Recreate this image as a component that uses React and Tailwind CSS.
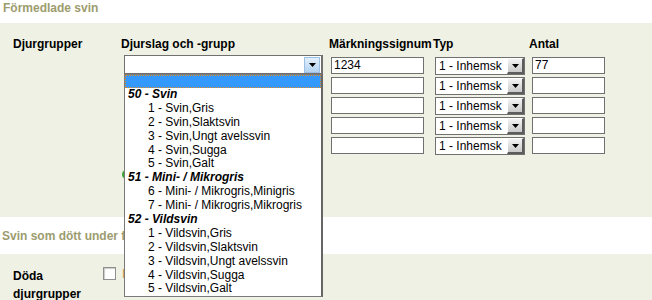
import React from 'react';

const groups = [
    { label: '50 - Svin', items: ['1 - Svin,Gris', '2 - Svin,Slaktsvin', '3 - Svin,Ungt avelssvin', '4 - Svin,Sugga', '5 - Svin,Galt'] },
    { label: '51 - Mini- / Mikrogris', items: ['6 - Mini- / Mikrogris,Minigris', '7 - Mini- / Mikrogris,Mikrogris'] },
    { label: '52 - Vildsvin', items: ['1 - Vildsvin,Gris', '2 - Vildsvin,Slaktsvin', '3 - Vildsvin,Ungt avelssvin', '4 - Vildsvin,Sugga', '5 - Vildsvin,Galt'] },
];

const rows = [
    { signum: '1234', antal: '77' },
    { signum: '', antal: '' },
    { signum: '', antal: '' },
    { signum: '', antal: '' },
    { signum: '', antal: '' },
];

const Triangle = () => (
    <svg width="7" height="4" viewBox="0 0 7 4"><path d="M0 0h7L3.5 4z" fill="#000" /></svg>
);

const TextBox = ({ value, className }) => (
    <div className={`h-[17px] bg-white border border-[#707070] px-[2px] leading-[15px] ${className}`}>{value}</div>
);

const TypSelect = () => (
    <div className="ml-[2px] mt-[2px] w-[90px] h-[18px] bg-white border border-[#707070] flex">
        <span className="flex-1 pl-[3px] leading-[16px]">1 - Inhemsk</span>
        <span className="w-[17px] h-full border-l border-t border-white border-r-2 border-b-2 border-r-[#5c5c5c] border-b-[#5c5c5c] bg-gradient-to-b from-[#f4f4f4] to-[#c9c9c9] flex items-center justify-center">
            <Triangle />
        </span>
    </div>
);

const DjurSelect = ({ open }) => (
    <div className="ml-[3px] w-[199px] h-[19px] bg-white border border-[#707070] border-r-2 flex justify-end items-center">
        {open && (
            <span className="w-[16px] h-[16px] mr-[1px] border border-[#9cc0e4] bg-gradient-to-b from-[#e3f0fc] to-[#b2d3f1] flex items-center justify-center">
                <Triangle />
            </span>
        )}
    </div>
);

export default function App() {
    return (
        <div className="relative w-[652px] h-[300px] overflow-hidden bg-white text-[12px] text-black font-['Liberation_Sans',Arial,sans-serif]">
            <h2 className="pl-[3px] h-[23px] leading-[16px] text-[12px] font-bold text-[#9c9c6e]">Förmedlade svin</h2>

            <div className="h-[194px] bg-[#eff1e4] pt-[14px] pl-[13px]">
                <div className="flex h-[18px] leading-[14px] font-bold">
                    <div className="w-[108px]">Djurgrupper</div>
                    <div className="w-[208px]">Djurslag och -grupp</div>
                    <div className="w-[104px]">Märkningssignum</div>
                    <div className="w-[96px]">Typ</div>
                    <div>Antal</div>
                </div>
                {rows.map((r, i) => (
                    <div key={i} className="flex h-[20px]">
                        <div className="w-[108px]" />
                        <div className="w-[208px]"><DjurSelect open={i === 0} /></div>
                        <div className="w-[104px]"><TextBox value={r.signum} className="ml-[2px] mt-[2px] w-[93px]" /></div>
                        <div className="w-[96px]"><TypSelect /></div>
                        <div><TextBox value={r.antal} className="ml-[3px] mt-[2px] w-[73px]" /></div>
                    </div>
                ))}
                <div className="flex mt-[15px]">
                    <div className="w-[109px]" />
                    <span className="w-[9px] h-[9px] rounded-full bg-[#3aa33a]" />
                </div>
            </div>

            <div className="h-[37px] pt-[11px] pl-[2px]">
                <h2 className="leading-[16px] text-[12px] font-bold text-[#9c9c6e]">Svin som dött under förmedlingen</h2>
            </div>

            <div className="h-[60px] bg-[#eff1e4] pt-[13px] pl-[13px] flex">
                <div className="w-[90px] font-bold leading-[18px]">Döda<br />djurgrupper</div>
                <span className="w-[13px] h-[13px] bg-white border border-[#8f8f8f] shadow-[inset_1px_1px_1px_#c8c8c8]" />
                <span className="ml-[6px] leading-[14px] text-[#c4944a]">Inga</span>
            </div>

            {/* open dropdown list */}
            <div className="absolute left-[124px] top-[74px] w-[199px] h-[223px] bg-white border border-[#7a7a7a] border-r-2 border-r-[#666] z-10 leading-[13.9px]">
                <div className="h-[13px] bg-[#3399ff] border border-dotted border-[#e08a2a]" />
                {groups.map((g) => (
                    <React.Fragment key={g.label}>
                        <div className="h-[13.9px] pl-[3px] font-bold italic">{g.label}</div>
                        {g.items.map((it) => (
                            <div key={it} className="h-[13.9px] pl-[23px]">{it}</div>
                        ))}
                    </React.Fragment>
                ))}
            </div>
        </div>
    );
}
